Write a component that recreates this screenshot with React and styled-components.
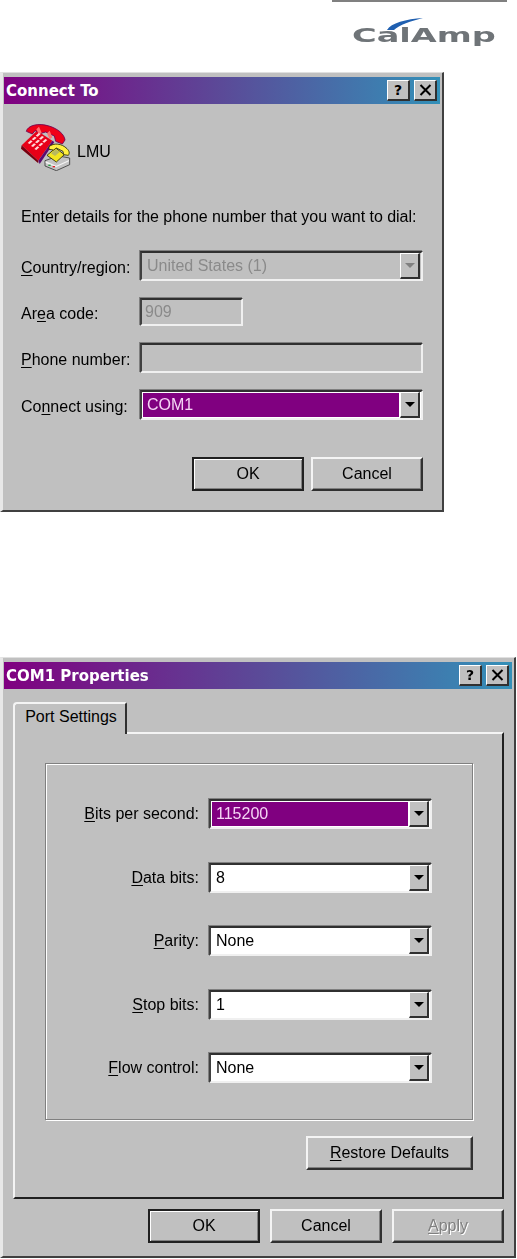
import React from 'react';
import styled, { createGlobalStyle } from 'styled-components';

const GlobalStyle = createGlobalStyle`
  html, body {
    margin: 0;
    padding: 0;
    background: #fff;
  }
`;

const Page = styled.div`
  width: 517px;
  height: 1259px;
  overflow: hidden;
  display: flex;
  flex-direction: column;
  font-family: "Liberation Sans", Arial, sans-serif;
  font-size: 16px;
  color: #000;
  filter: blur(0.35px);
`;

const Header = styled.header`
  height: 72px;
  display: flex;
  flex-direction: column;
  align-items: flex-end;
`;

const Rule = styled.div`
  width: 175px;
  height: 2px;
  margin-right: 10px;
  background: #808080;
`;

const Logo = styled.div`
  position: relative;
  width: 143px;
  height: 20px;
  margin: 23px 22px 0 0;
`;

const LogoText = styled.span`
  display: block;
  font-family: "DejaVu Sans", sans-serif;
  font-weight: 700;
  font-size: 20px;
  line-height: 20px;
  color: #6f7478;
  white-space: nowrap;
  transform: scaleX(1.68);
  transform-origin: left center;
  filter: blur(0.4px);
`;

const Swoosh = styled.svg`
  position: absolute;
  left: 34px;
  top: -8px;
`;

const Dialog = styled.section`
  box-sizing: border-box;
  width: ${p => p.$width}px;
  height: ${p => p.$height}px;
  margin-bottom: ${p => p.$gap || 0}px;
  flex: none;
  display: flex;
  flex-direction: column;
  background: #c0c0c0;
  border-style: solid;
  border-width: 1px 2px 2px 3px;
  border-color: #e0e0e0 #404040 #404040 #e8e8e8;
  padding: 4px 2px 0 1px;
`;

const TitleBar = styled.div`
  flex: none;
  height: 27px;
  display: flex;
  align-items: center;
  justify-content: space-between;
  padding: 0 3px 0 2px;
  background: linear-gradient(90deg, #800080 0%, #5b4a98 50%, #3390b8 100%);
`;

const Title = styled.span`
  font-family: "DejaVu Sans", sans-serif;
  font-weight: 700;
  font-size: 15px;
  color: #fff;
`;

const CaptionButtons = styled.div`
  display: flex;
  gap: 4px;
`;

const CaptionButton = styled.div`
  box-sizing: border-box;
  width: 23px;
  height: 21px;
  display: flex;
  align-items: center;
  justify-content: center;
  background: #c0c0c0;
  border-style: solid;
  border-width: 1px 2px 2px 1px;
  border-color: #fff #303030 #303030 #fff;
  font-family: "DejaVu Sans", sans-serif;
  font-weight: 700;
  font-size: 14px;
  line-height: 1;
`;

const Key = styled.span`
  text-decoration: underline;
  text-underline-offset: 2px;
`;

/* Connect To */
const ConnectBody = styled.div`
  flex: 1;
  display: flex;
  flex-direction: column;
  padding: 17px 17px 0 17px;
`;

const Connection = styled.div`
  height: 50px;
  display: flex;
  align-items: center;
  gap: 6px;
`;

const ConnectionName = styled.span`
  padding-top: 12px;
`;

const Prompt = styled.p`
  margin: 36px 0 0;
  line-height: 20px;
  letter-spacing: -0.04px;
  white-space: nowrap;
`;

const Fields = styled.div`
  margin-top: 24px;
  display: flex;
  flex-direction: column;
  gap: 17px;
`;

const FieldRow = styled.div`
  display: flex;
  align-items: center;
`;

const FieldLabel = styled.label`
  width: 119px;
  flex: none;
  padding-top: 4px;
  white-space: nowrap;
`;

const Sunken = styled.div`
  box-sizing: border-box;
  width: ${p => p.$width}px;
  height: ${p => p.$height || 30}px;
  flex: none;
  display: flex;
  align-items: stretch;
  padding: 1px;
  background: ${p => (p.$disabled ? '#c0c0c0' : '#fff')};
  border-style: solid;
  border-width: 2px;
  border-color: #303030 #f0f0f0 #f0f0f0 #404040;
  box-shadow: -1px -1px 0 #808080;
  color: ${p => (p.$disabled ? '#8a8a8a' : '#000')};
`;

const Value = styled.div`
  flex: 1;
  display: flex;
  align-items: center;
  padding-left: ${p => p.$inset ?? 4}px;
  white-space: nowrap;
  background: ${p => (p.$selected ? '#800080' : 'transparent')};
  color: ${p => (p.$selected ? '#f4d4f4' : 'inherit')};
`;

const DropButton = styled.div`
  box-sizing: border-box;
  width: 20px;
  flex: none;
  margin: -1px 0 -1px 1px;
  display: flex;
  align-items: center;
  justify-content: center;
  background: #c0c0c0;
  border-style: solid;
  border-width: 1px 2px 2px 1px;
  border-color: #fff #303030 #303030 #fff;
`;

const Arrow = styled.span`
  width: 0;
  height: 0;
  border-style: solid;
  border-width: 5px 5px 0;
  border-color: ${p => (p.$disabled ? '#808080' : '#000')} transparent transparent;
`;

const Actions = styled.div`
  display: flex;
  justify-content: flex-end;
  gap: ${p => p.$gap || 7}px;
`;

const ConnectActions = styled(Actions)`
  margin-top: 37px;
`;

const Button = styled.button`
  box-sizing: border-box;
  width: ${p => p.$width || 112}px;
  height: 34px;
  padding: 0;
  background: #c0c0c0;
  font: inherit;
  color: ${p => (p.disabled ? '#808080' : '#000')};
  text-shadow: ${p => (p.disabled ? '1px 1px 0 #fff' : 'none')};
  border-style: solid;
  border-width: 2px;
  border-color: ${p => (p.$primary ? '#202020' : '#f4f4f4 #303030 #303030 #f4f4f4')};
  box-shadow: ${p => (p.$primary
    ? 'inset 1px 1px 0 #fff, inset -1px -1px 0 #808080'
    : 'inset -1px -1px 0 #808080')};
`;

/* COM1 Properties */
const PropertiesBody = styled.div`
  flex: 1;
  display: flex;
  flex-direction: column;
  padding: 13px 8px 0 9px;
`;

const TabStrip = styled.div`
  height: 30px;
  display: flex;
  flex: none;
`;

const Tab = styled.div`
  box-sizing: border-box;
  width: 114px;
  margin-bottom: -2px;
  position: relative;
  z-index: 1;
  display: flex;
  align-items: center;
  justify-content: center;
  background: #c0c0c0;
  border-style: solid;
  border-width: 2px 2px 0 2px;
  border-color: #f4f4f4 #303030 #c0c0c0 #f4f4f4;
  border-top-left-radius: 4px;
  border-top-right-radius: 2px;
  padding: 0 0 5px 2px;
`;

const TabPanel = styled.div`
  box-sizing: border-box;
  height: 467px;
  flex: none;
  display: flex;
  flex-direction: column;
  padding: 29px 29px 0 30px;
  border-style: solid;
  border-width: 2px;
  border-color: #f4f4f4 #202020 #202020 #f4f4f4;
`;

const Group = styled.div`
  box-sizing: border-box;
  height: 357px;
  flex: none;
  display: flex;
  flex-direction: column;
  justify-content: space-between;
  padding: 35px 0 36px;
  border: 1px solid #808080;
  box-shadow: inset 1px 1px 0 #fff, 1px 1px 0 #fff;
`;

const SettingRow = styled.div`
  display: flex;
  align-items: center;
`;

const SettingLabel = styled.label`
  width: 153px;
  flex: none;
  margin-right: 10px;
  text-align: right;
  white-space: nowrap;
`;

const RestoreRow = styled.div`
  margin-top: 16px;
  display: flex;
  justify-content: flex-end;
`;

const PropertiesActions = styled(Actions)`
  margin-top: 10px;
`;

const PhoneIcon = () => (
  <svg width="50" height="50" viewBox="60 165 150 150" aria-hidden="true">
    {/* red phone: base */}
    <path d="M62 238l46-44 46 30-42 60z" fill="#e80018" />
    <path d="M62 238l50 46v8L60 248z" fill="#780010" />
    <path d="M112 284l42-60 6 4-44 66z" fill="#5a0a70" />
    {/* red phone: handset */}
    <path d="M76 196c4-18 36-26 68-16 26 8 46 24 48 42l-8 12-20-8-4-16-26-12-14 4-18-8-8 10z" fill="#f00018" stroke="#6a0050" strokeWidth="2.5" />
    <path d="M106 190l8-8 8 18-8 6zM138 202l8-8 8 20-8 6z" fill="#ff7070" />
    {/* keypad */}
    <g fill="#ffd8d8">
      <path d="M80 231l9-8 6 3-9 8zM92 220l9-8 6 3-9 8zM104 209l9-8 6 3-9 8z" />
      <path d="M90 240l9-8 6 3-9 8zM102 229l9-8 6 3-9 8zM114 218l9-8 6 3-9 8z" />
      <path d="M100 249l9-8 6 3-9 8zM112 238l9-8 6 3-9 8zM124 227l9-8 6 3-9 8z" />
    </g>
    {/* modem */}
    <path d="M132 284l40-14 34 6v20l-40 18-34-14z" fill="#c4c4c4" stroke="#383838" strokeWidth="2.5" />
    <path d="M134 286l32 13 38-17v4l-38 17-32-12z" fill="#f4f4f4" />
    <rect x="142" y="296" width="7" height="4" fill="#20a040" />
    <rect x="155" y="300" width="7" height="4" fill="#e02020" />
    {/* yellow phone */}
    <path d="M138 268l26-22 26 20-24 22z" fill="#f2e420" stroke="#2a2a00" strokeWidth="2.5" />
    <path d="M144 242c14-12 38-10 54 6 8 8 8 14 4 20l-14-2-2-10-20-10-8 6-14-2z" fill="#fff040" stroke="#2a2a00" strokeWidth="2.5" />
    <path d="M150 262l14-12 12 8-14 12z" fill="#b8b860" />
  </svg>
);

const Combo = ({ value, selected, disabled, width = 283 }) => (
  <Sunken $width={width} $disabled={disabled}>
    <Value $selected={selected}>{value}</Value>
    <DropButton>
      <Arrow $disabled={disabled} />
    </DropButton>
  </Sunken>
);

const Caption = ({ children }) => (
  <TitleBar>
    <Title>{children}</Title>
    <CaptionButtons>
      <CaptionButton>?</CaptionButton>
      <CaptionButton>
        <svg width="13" height="12" viewBox="0 0 13 12" aria-hidden="true">
          <path d="M1.5 1l10 10M11.5 1l-10 10" stroke="#000" strokeWidth="2" />
        </svg>
      </CaptionButton>
    </CaptionButtons>
  </TitleBar>
);

const settings = [
  { key: 'B', rest: 'its per second:', value: '115200', selected: true },
  { key: 'D', rest: 'ata bits:', value: '8' },
  { key: 'P', rest: 'arity:', value: 'None' },
  { key: 'S', rest: 'top bits:', value: '1' },
  { key: 'F', rest: 'low control:', value: 'None' },
];

export default function App() {
  return (
    <Page>
      <GlobalStyle />
      <Header>
        <Rule />
        <Logo>
          <LogoText>CalAmp</LogoText>
          <Swoosh width="38" height="14" viewBox="0 0 38 14" aria-hidden="true">
            <path d="M1 13C5 6 20 2 37 1 25 4 13 8 8 13z" fill="#1f5fb0" />
          </Swoosh>
        </Logo>
      </Header>

      <Dialog $width={444} $height={440} $gap={145}>
        <Caption>Connect To</Caption>
        <ConnectBody>
          <Connection>
            <PhoneIcon />
            <ConnectionName>LMU</ConnectionName>
          </Connection>
          <Prompt>Enter details for the phone number that you want to dial:</Prompt>
          <Fields>
            <FieldRow>
              <FieldLabel><Key>C</Key>ountry/region:</FieldLabel>
              <Combo value="United States (1)" disabled />
            </FieldRow>
            <FieldRow>
              <FieldLabel>Ar<Key>e</Key>a code:</FieldLabel>
              <Sunken $width={103} $height={28} $disabled>
                <Value $inset={2}>909</Value>
              </Sunken>
            </FieldRow>
            <FieldRow>
              <FieldLabel><Key>P</Key>hone number:</FieldLabel>
              <Sunken $width={283} $disabled />
            </FieldRow>
            <FieldRow>
              <FieldLabel>Co<Key>n</Key>nect using:</FieldLabel>
              <Combo value="COM1" selected />
            </FieldRow>
          </Fields>
          <ConnectActions>
            <Button $primary>OK</Button>
            <Button>Cancel</Button>
          </ConnectActions>
        </ConnectBody>
      </Dialog>

      <Dialog $width={516} $height={601}>
        <Caption>COM1 Properties</Caption>
        <PropertiesBody>
          <TabStrip>
            <Tab>Port Settings</Tab>
          </TabStrip>
          <TabPanel>
            <Group>
              {settings.map(s => (
                <SettingRow key={s.key}>
                  <SettingLabel><Key>{s.key}</Key>{s.rest}</SettingLabel>
                  <Combo value={s.value} selected={s.selected} width={223} />
                </SettingRow>
              ))}
            </Group>
            <RestoreRow>
              <Button $width={167}><Key>R</Key>estore Defaults</Button>
            </RestoreRow>
          </TabPanel>
          <PropertiesActions $gap={10}>
            <Button $primary>OK</Button>
            <Button>Cancel</Button>
            <Button disabled><Key>A</Key>pply</Button>
          </PropertiesActions>
        </PropertiesBody>
      </Dialog>
    </Page>
  );
}
